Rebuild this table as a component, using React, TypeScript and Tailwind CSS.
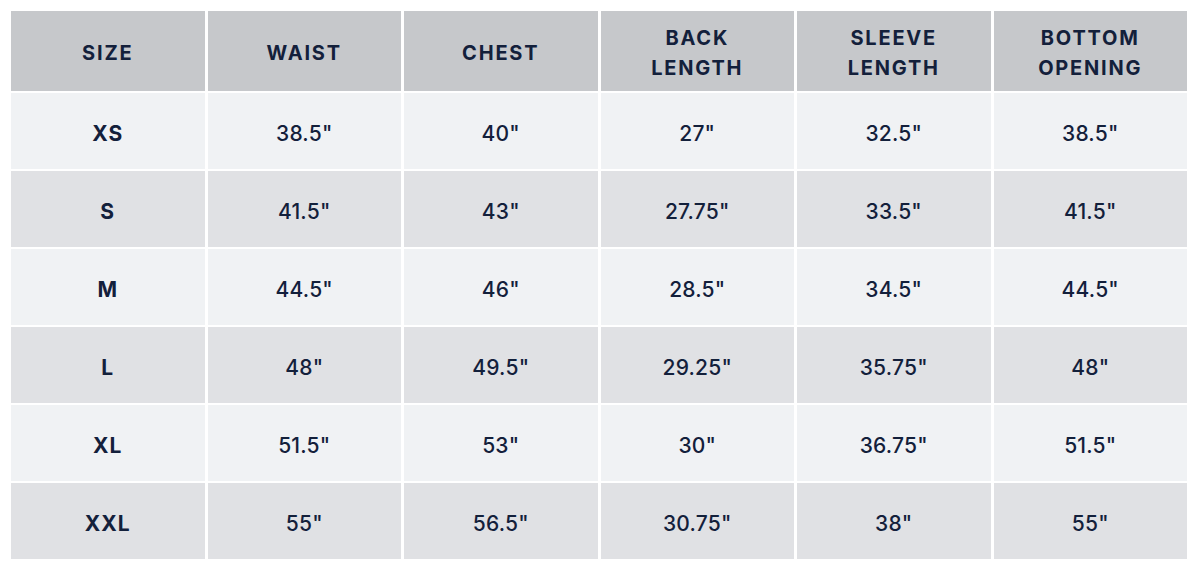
import React from "react";

const headers: string[][] = [
  ["SIZE"],
  ["WAIST"],
  ["CHEST"],
  ["BACK", "LENGTH"],
  ["SLEEVE", "LENGTH"],
  ["BOTTOM", "OPENING"],
];

const rows: string[][] = [
  ["XS", '38.5"', '40"', '27"', '32.5"', '38.5"'],
  ["S", '41.5"', '43"', '27.75"', '33.5"', '41.5"'],
  ["M", '44.5"', '46"', '28.5"', '34.5"', '44.5"'],
  ["L", '48"', '49.5"', '29.25"', '35.75"', '48"'],
  ["XL", '51.5"', '53"', '30"', '36.75"', '51.5"'],
  ["XXL", '55"', '56.5"', '30.75"', '38"', '55"'],
];

export default function App() {
  return (
    <div
      className="w-[1194px] h-[566px] bg-white pl-[11px] pt-[11px] text-[#13203b]"
      style={{ fontFamily: "Inter, 'Liberation Sans', sans-serif" }}
    >
      <div className="w-[1176px] grid grid-cols-6 gap-x-[3px] gap-y-[2px] grid-rows-[80px_repeat(6,76px)]">
        {headers.map((h, i) => (
          <div
            key={i}
            className="bg-[#c6c8cb] flex flex-col items-center justify-center pt-[3px] text-[20px] leading-[30px] font-bold tracking-[0.09em]"
          >
            {h.map((l) => (
              <span key={l}>{l}</span>
            ))}
          </div>
        ))}
        {rows.map((r, ri) =>
          r.map((c, ci) => (
            <div
              key={`${ri}-${ci}`}
              className={`${ri % 2 === 0 ? "bg-[#f0f2f4]" : "bg-[#e0e1e4]"} flex items-center justify-center pt-[5px] text-[21px] ${ci === 0 ? "font-bold tracking-[0.05em]" : "font-medium tracking-[0.01em]"}`}
            >
              {c}
            </div>
          ))
        )}
      </div>
    </div>
  );
}
